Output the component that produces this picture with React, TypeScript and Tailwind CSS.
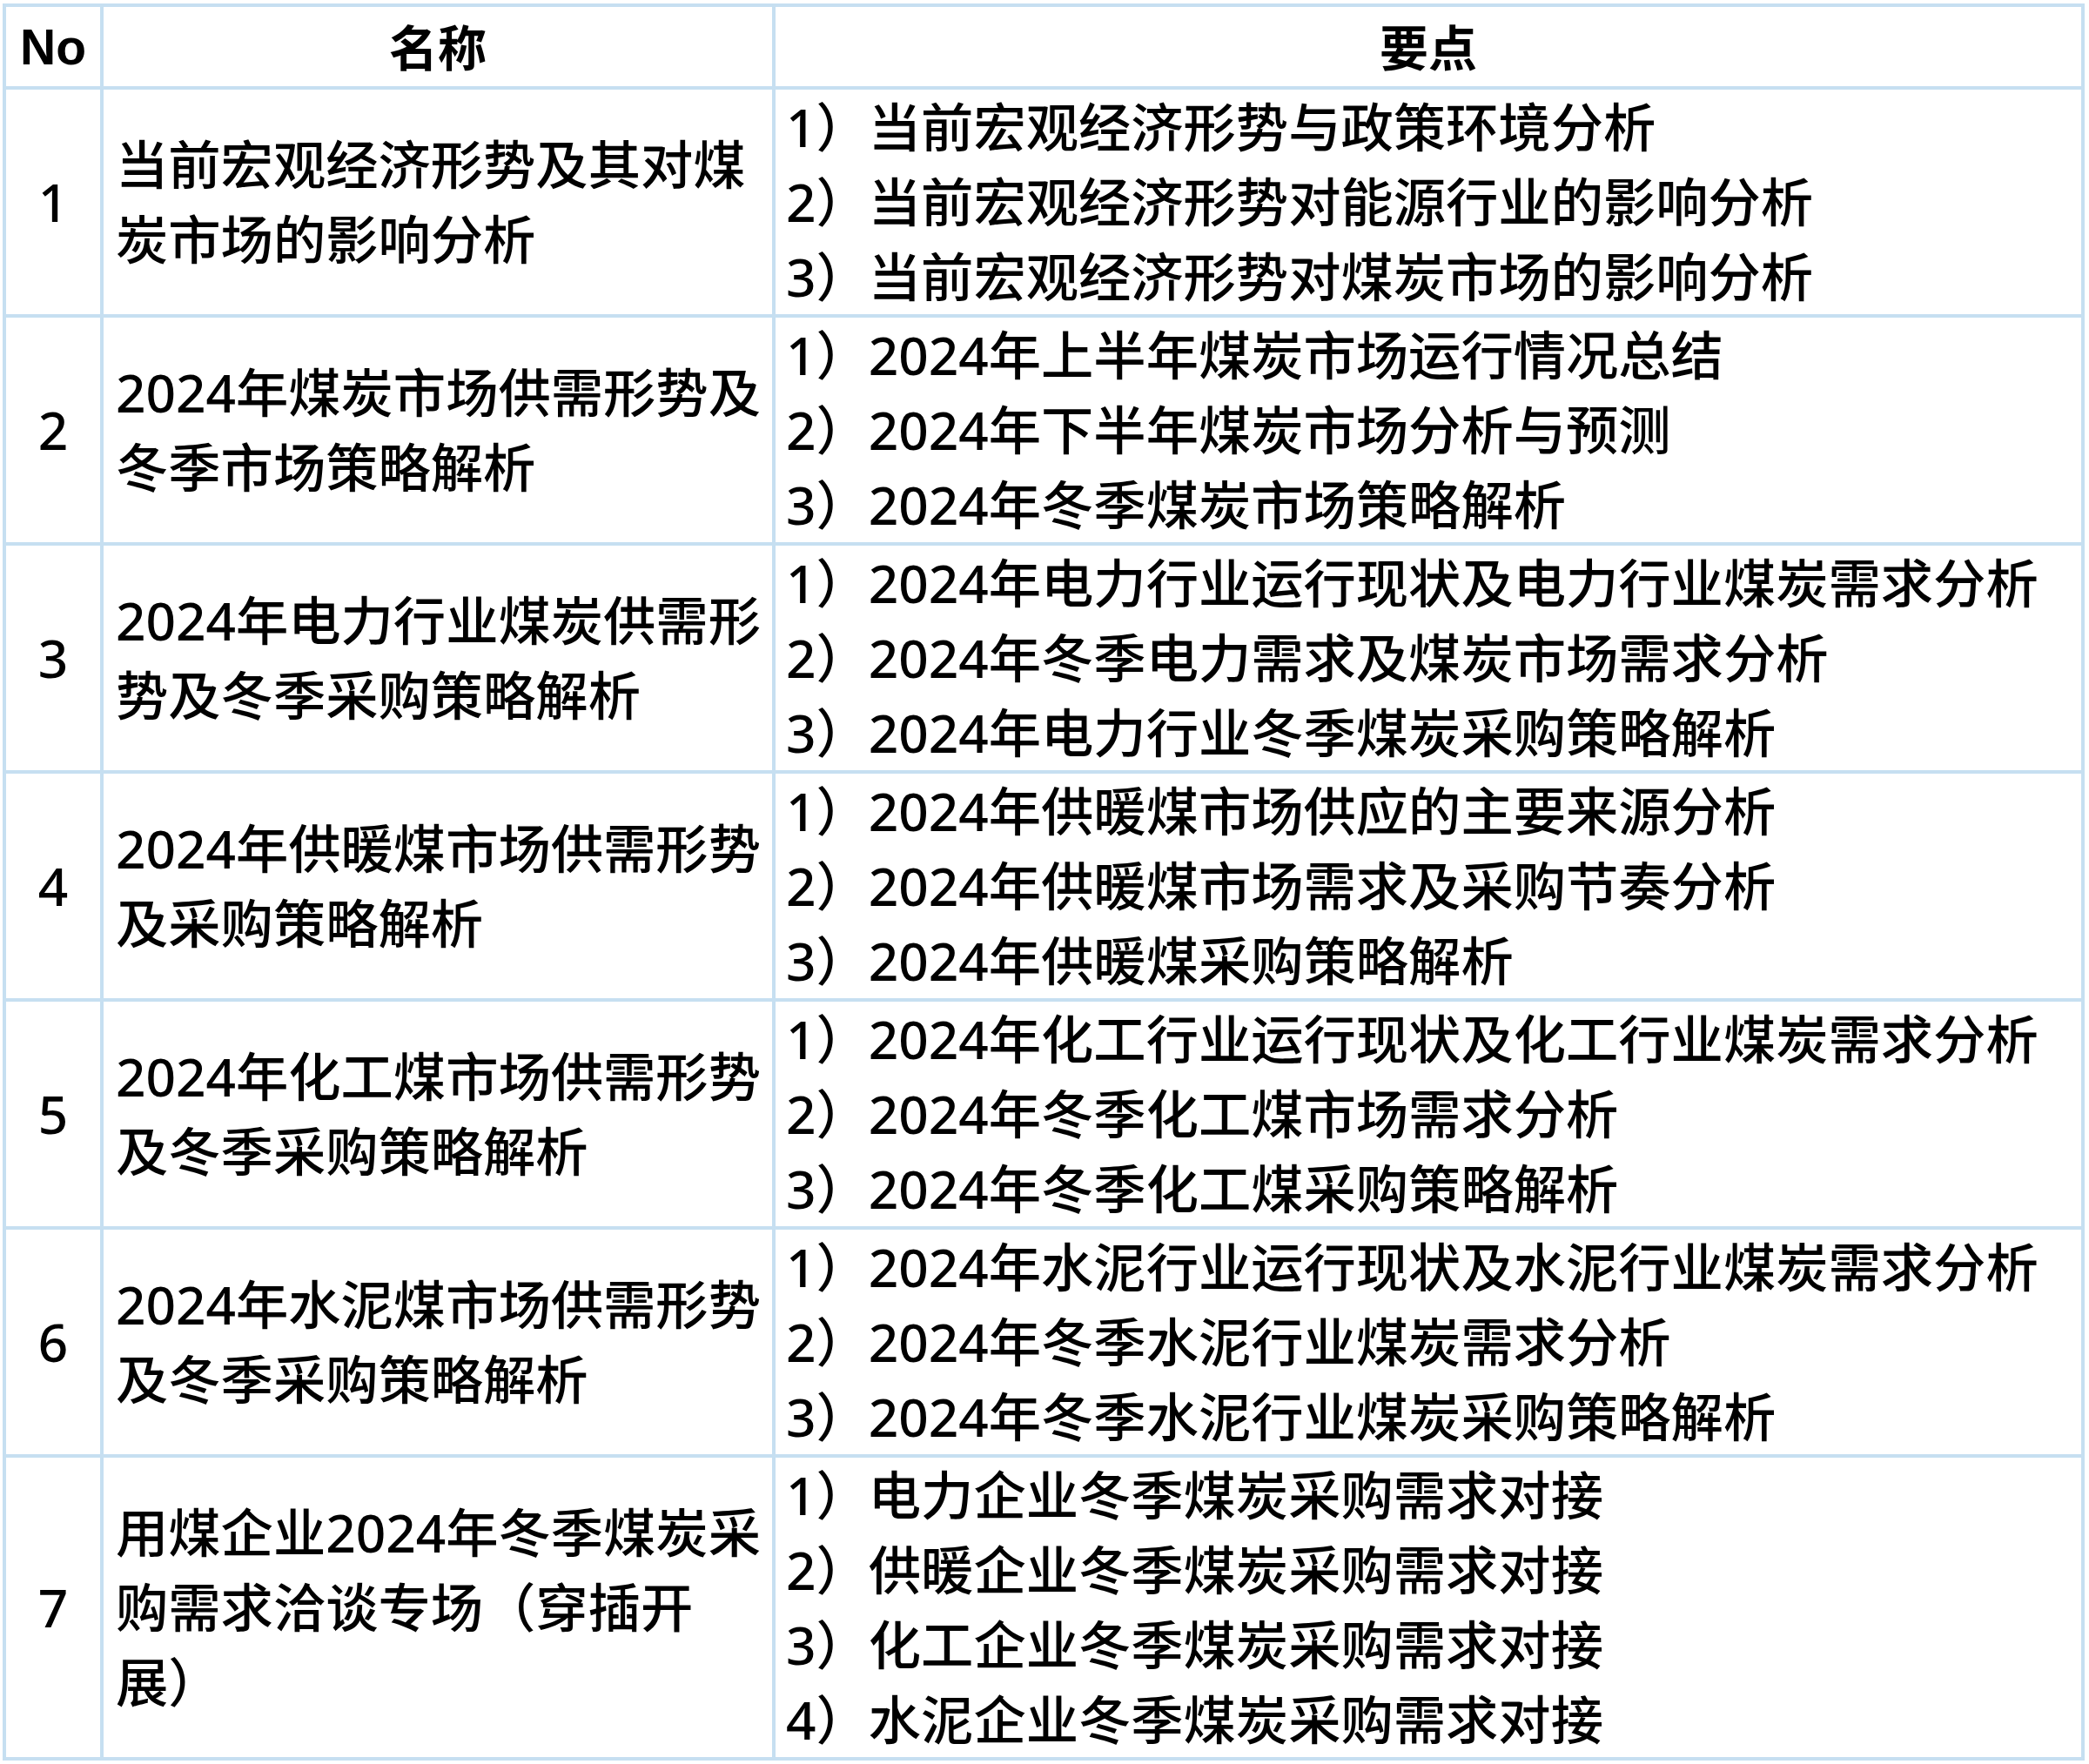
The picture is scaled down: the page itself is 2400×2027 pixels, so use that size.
import React from 'react';

type Row = {
  no: string;
  name: string[];
  points: string[];
};

const rows: Row[] = [
  {
    no: '1',
    name: ['当前宏观经济形势及其对煤', '炭市场的影响分析'],
    points: [
      '1）当前宏观经济形势与政策环境分析',
      '2）当前宏观经济形势对能源行业的影响分析',
      '3）当前宏观经济形势对煤炭市场的影响分析',
    ],
  },
  {
    no: '2',
    name: ['2024年煤炭市场供需形势及', '冬季市场策略解析'],
    points: [
      '1）2024年上半年煤炭市场运行情况总结',
      '2）2024年下半年煤炭市场分析与预测',
      '3）2024年冬季煤炭市场策略解析',
    ],
  },
  {
    no: '3',
    name: ['2024年电力行业煤炭供需形', '势及冬季采购策略解析'],
    points: [
      '1）2024年电力行业运行现状及电力行业煤炭需求分析',
      '2）2024年冬季电力需求及煤炭市场需求分析',
      '3）2024年电力行业冬季煤炭采购策略解析',
    ],
  },
  {
    no: '4',
    name: ['2024年供暖煤市场供需形势', '及采购策略解析'],
    points: [
      '1）2024年供暖煤市场供应的主要来源分析',
      '2）2024年供暖煤市场需求及采购节奏分析',
      '3）2024年供暖煤采购策略解析',
    ],
  },
  {
    no: '5',
    name: ['2024年化工煤市场供需形势', '及冬季采购策略解析'],
    points: [
      '1）2024年化工行业运行现状及化工行业煤炭需求分析',
      '2）2024年冬季化工煤市场需求分析',
      '3）2024年冬季化工煤采购策略解析',
    ],
  },
  {
    no: '6',
    name: ['2024年水泥煤市场供需形势', '及冬季采购策略解析'],
    points: [
      '1）2024年水泥行业运行现状及水泥行业煤炭需求分析',
      '2）2024年冬季水泥行业煤炭需求分析',
      '3）2024年冬季水泥行业煤炭采购策略解析',
    ],
  },
  {
    no: '7',
    name: ['用煤企业2024年冬季煤炭采', '购需求洽谈专场（穿插开', '展）'],
    points: [
      '1）电力企业冬季煤炭采购需求对接',
      '2）供暖企业冬季煤炭采购需求对接',
      '3）化工企业冬季煤炭采购需求对接',
      '4）水泥企业冬季煤炭采购需求对接',
    ],
  },
];

const cell = 'border-r-4 border-b-4 border-[#c6dff1]';

function App() {
  return (
    <div className="min-h-screen bg-white pl-[3px] pt-[4px] font-['Noto_Sans','Noto_Sans_CJK_SC',sans-serif] text-black">
      <div className="grid w-[2392px] grid-cols-[112px_772px_1504px] border-l-4 border-t-4 border-[#c6dff1] text-[60.3px] leading-[86px] font-medium">
        {/* header */}
        <div className={`${cell} flex h-[95px] items-center justify-center font-['Liberation_Sans',sans-serif] text-[57px] font-bold`}>
          No
        </div>
        <div className={`${cell} flex h-[95px] items-center justify-center text-[56px] font-bold`}>名称</div>
        <div className={`${cell} flex h-[95px] items-center justify-center text-[56px] font-bold`}>要点</div>

        {rows.map((row) => (
          <React.Fragment key={row.no}>
            <div className={`${cell} flex items-center justify-center`}>{row.no}</div>
            <div className={`${cell} flex flex-col justify-center pl-[14px]`}>
              {row.name.map((line) => (
                <div key={line} className="whitespace-nowrap">
                  {line}
                </div>
              ))}
            </div>
            <div className={`${cell} flex flex-col justify-center pl-[12px]`}>
              {row.points.map((line) => (
                <div key={line} className="whitespace-nowrap">
                  {line}
                </div>
              ))}
            </div>
          </React.Fragment>
        ))}
      </div>
    </div>
  );
}

export default App;
